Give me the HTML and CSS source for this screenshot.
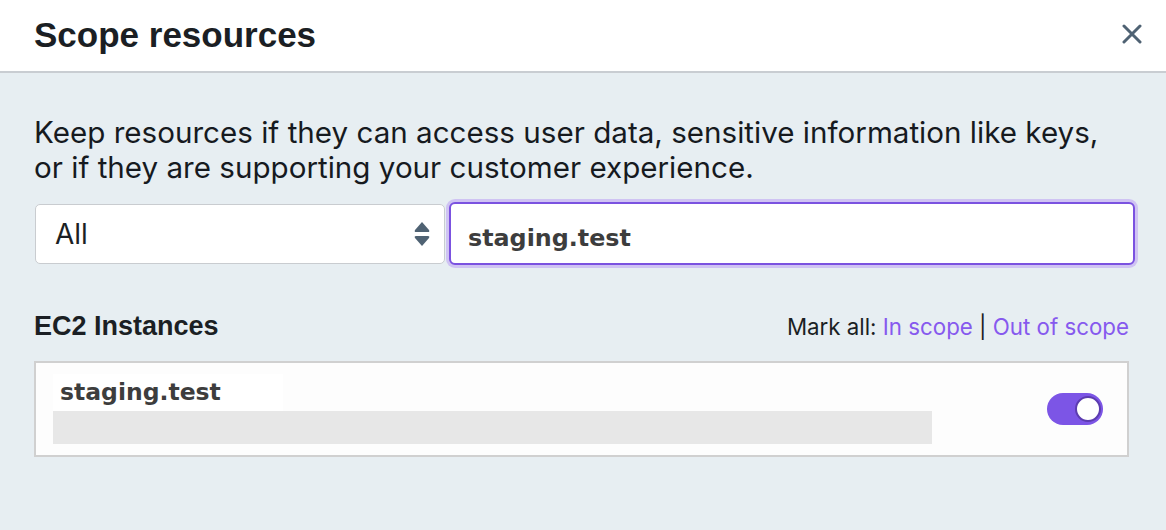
FILE: index.html
```html
<!DOCTYPE html>
<html>
<head>
<meta charset="utf-8">
<link rel="stylesheet" href="styles.css">
</head>
<body>
<div class="modal">
  <header class="header">
    <h1 class="title">Scope resources</h1>
    <button class="close" aria-label="Close">
      <svg width="20" height="20" viewBox="0 0 20 20"><path d="M2 2 L18 18 M18 2 L2 18" stroke="#4f6273" stroke-width="3" stroke-linecap="round"/></svg>
    </button>
  </header>
  <main class="body">
    <p class="desc">Keep resources if they can access user data, sensitive information like keys, or if they are supporting your customer experience.</p>
    <div class="filters">
      <div class="select">
        <span>All</span>
        <svg class="arrows" width="16" height="26" viewBox="0 0 16 26"><path d="M8 1 L15 9 Q16 11 14 11 L2 11 Q0 11 1 9 Z M8 25 L15 17 Q16 15 14 15 L2 15 Q0 15 1 17 Z" fill="#4f6273"/></svg>
      </div>
      <div class="search">staging.test</div>
    </div>
    <div class="section-head">
      <h2 class="section-title">EC2 Instances</h2>
      <div class="mark">Mark all: <a class="link">In scope</a> | <a class="link">Out of scope</a></div>
    </div>
    <div class="card">
      <div class="card-info">
        <div class="res-name">staging.test</div>
        <div class="res-bar"></div>
      </div>
      <div class="toggle"><div class="knob"></div></div>
    </div>
  </main>
</div>
</body>
</html>
```
FILE: styles.css
```css
* { box-sizing: border-box; }
html, body { margin: 0; padding: 0; }
body { width: 1166px; height: 530px; overflow: hidden; background: #e7eef2; font-family: Inter, "Liberation Sans", sans-serif; color: #1b1f24; }
.modal { display: flex; flex-direction: column; height: 530px; }
.header { height: 73px; background: #fff; border-bottom: 2px solid #c9cdd2; display: flex; align-items: center; justify-content: space-between; padding: 0 24px 0 34px; }
.title { margin: 0 0 2px; font-family: "Liberation Sans", Arial, sans-serif; font-weight: 700; font-size: 35px; color: #1b1f24; }
.close { background: none; border: 0; padding: 0; margin-top: -4px; display: flex; }
.body { padding: 0 34px; flex: 1; }
.desc { margin: 42px 0 0; font-size: 29.6px; line-height: 35px; color: #161a1f; }
.filters { display: flex; gap: 4px; margin-top: 17px; align-items: center; }
.select { width: 410px; height: 60px; margin-left: 1px; background: #fff; border: 1px solid #c9ccd0; border-radius: 5px; display: flex; align-items: center; justify-content: space-between; padding: 0 14px 0 19px; font-size: 28px; }
.search { flex: 1; height: 63px; margin-right: -3px; background: #fff; border: 2px solid #7b52e0; border-radius: 6px; box-shadow: 0 0 0 3px #cfc3f3; display: flex; align-items: center; padding: 9px 17px 0; font-family: "DejaVu Sans", Verdana, sans-serif; font-weight: 700; font-size: 23.8px; color: #3d3d3d; }
.section-head { display: flex; justify-content: space-between; align-items: baseline; margin-top: 46px; }
.section-title { margin: 0; font-family: "Liberation Sans", Arial, sans-serif; font-weight: 700; font-size: 27px; color: #1b1f24; }
.mark { font-size: 22.3px; color: #1b1f24; margin-right: 3px; }
.link { color: #8659ee; }
.card { margin-top: 19px; height: 96px; width: 1095px; background: #fdfdfd; border: 2px solid #d0d0d0; display: flex; align-items: center; justify-content: space-between; padding: 0 24px 0 17px; }
.card-info { display: flex; flex-direction: column; align-self: flex-start; margin-top: 11px; }
.res-name { width: 230px; height: 37px; background: #fff; font-family: "DejaVu Sans", Verdana, sans-serif; font-weight: 700; font-size: 23.5px; color: #3d3d3d; padding: 4px 0 0 7px; }
.res-bar { width: 879px; height: 33px; background: #e7e7e7; }
.toggle { width: 56px; height: 32px; border-radius: 16px; background: #7c55e6; position: relative; }
.knob { position: absolute; right: 2px; top: 3px; width: 26px; height: 26px; border-radius: 50%; background: #fff; border: 2px solid #5c3cb0; }
```
